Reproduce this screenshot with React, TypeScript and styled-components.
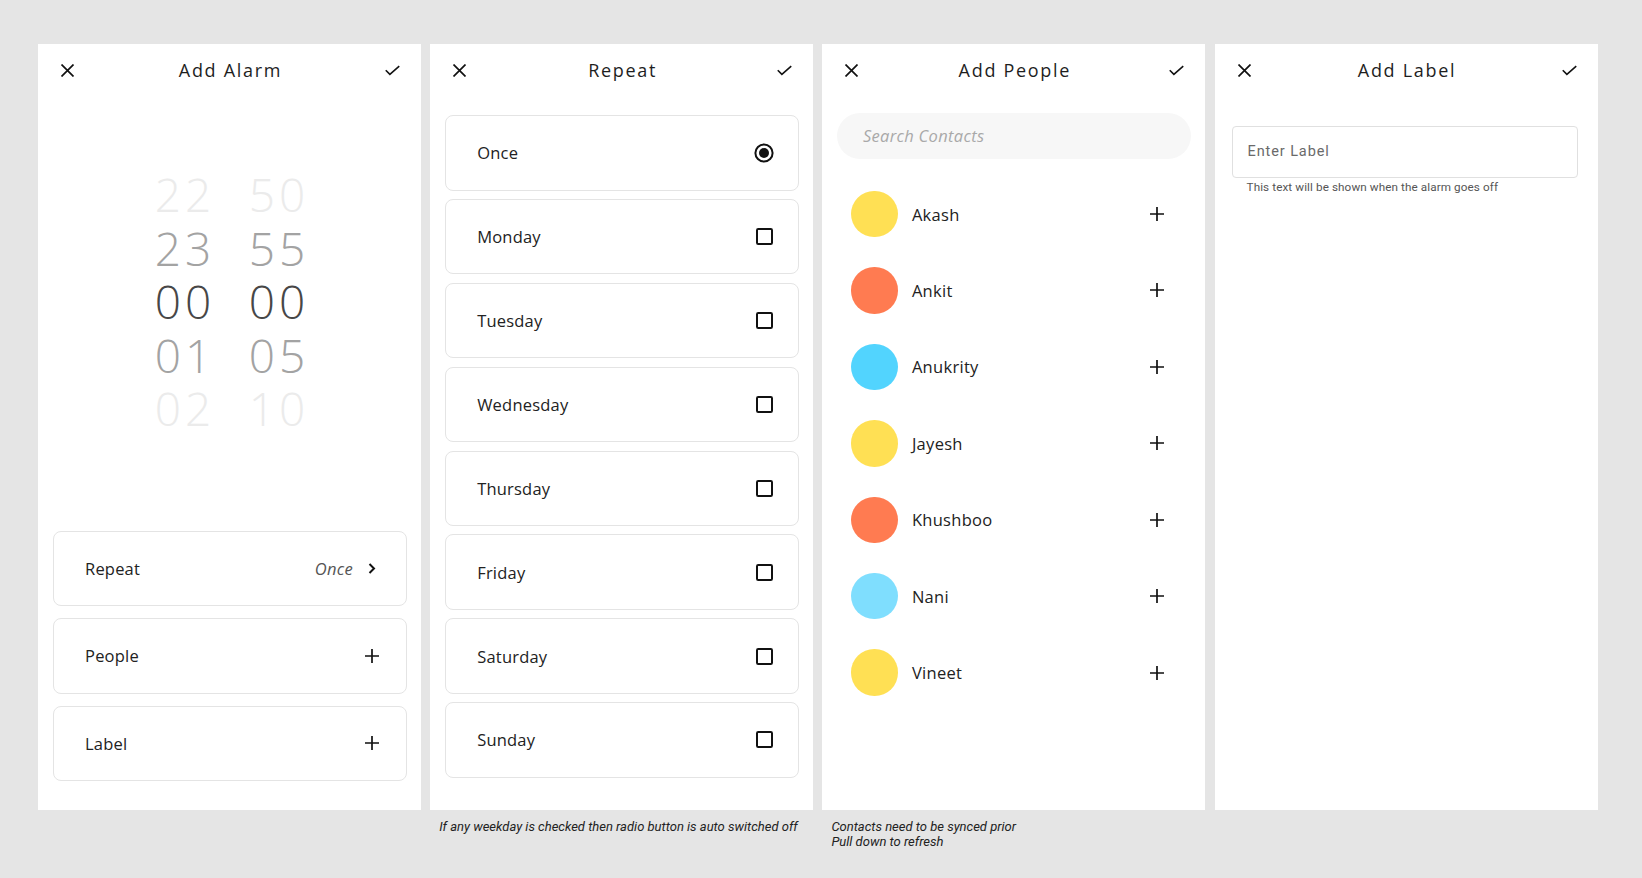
import React from "react";
import styled, { createGlobalStyle } from "styled-components";

const Global = createGlobalStyle`
  html, body { margin: 0; padding: 0; background: #e5e5e5; }
  body { font-family: "Open Sans", "Noto Sans", sans-serif; color: #222; }
  * { box-sizing: border-box; }
`;

const Page = styled.div`
  display: flex;
  gap: 9.2px;
  padding: 44px 0 0 38px;
  min-height: 878px;
`;

const Column = styled.div`
  display: flex;
  flex-direction: column;
  width: 383px;
`;

const Panel = styled.div`
  background: #fff;
  height: 766px;
  display: flex;
  flex-direction: column;
`;

const Header = styled.div`
  height: 52px;
  flex: 0 0 52px;
  display: flex;
  align-items: center;
  justify-content: space-between;
  padding: 0 21px 0 22px;
`;

const Title = styled.div`
  font-size: 18px;
  letter-spacing: 1.7px;
  color: #1e1e1e;
  padding-left: 1px;
`;

const IconBox = styled.div`
  width: 15px;
  height: 15px;
  display: flex;
  align-items: center;
  justify-content: center;
`;

const Note = styled.div`
  font-family: Roboto, "Liberation Sans", sans-serif;
  font-style: italic;
  font-size: 13px;
  line-height: 14.5px;
  color: #222;
  padding: 10px 0 0 9px;
`;

/* ---------- icons ---------- */
const CloseIcon = () => (
  <svg width="13" height="13" viewBox="0 0 13 13">
    <path d="M0.5 0.5 L12.5 12.5 M12.5 0.5 L0.5 12.5" stroke="#111" strokeWidth="1.7" fill="none" />
  </svg>
);
const CheckIcon = () => (
  <svg width="16" height="11" viewBox="0 0 16 11">
    <path d="M0.8 5.2 L5.2 9.6 L15.2 0.8" stroke="#111" strokeWidth="1.7" fill="none" />
  </svg>
);
const PlusIcon = () => (
  <svg width="14" height="14" viewBox="0 0 14 14">
    <path d="M7 0 V14 M0 7 H14" stroke="#111" strokeWidth="1.7" fill="none" />
  </svg>
);
const ChevronIcon = () => (
  <svg width="8" height="11" viewBox="0 0 8 11">
    <path d="M1.5 1 L6 5.5 L1.5 10" stroke="#111" strokeWidth="2" fill="none" />
  </svg>
);
const RadioIcon = () => (
  <svg width="20" height="20" viewBox="0 0 20 20">
    <circle cx="10" cy="10" r="8.6" stroke="#111" strokeWidth="2" fill="none" />
    <circle cx="10" cy="10" r="5" fill="#111" />
  </svg>
);
const BoxIcon = () => (
  <svg width="17" height="17" viewBox="0 0 17 17">
    <rect x="1" y="1" width="15" height="15" rx="1.2" stroke="#111" strokeWidth="2" fill="none" />
  </svg>
);

const PanelHeader: React.FC<{ title: string }> = ({ title }) => (
  <Header>
    <IconBox><CloseIcon /></IconBox>
    <Title>{title}</Title>
    <IconBox><CheckIcon /></IconBox>
  </Header>
);

/* ---------- cards ---------- */
const CardList = styled.div<{ $gap: number; $top?: number }>`
  display: flex;
  flex-direction: column;
  gap: ${(p) => p.$gap}px;
  padding: 0 14px 0 15px;
  margin-top: ${(p) => (p.$top !== undefined ? `${p.$top}px` : "auto")};
  margin-bottom: ${(p) => (p.$top !== undefined ? "0" : "29px")};
`;

const Card = styled.div`
  height: 75.5px;
  border: 1px solid #e4e4e4;
  border-radius: 8px;
  display: flex;
  align-items: center;
  padding: 0 24px 0 31px;
  font-size: 16.5px;
  color: #222;
  letter-spacing: 0.2px;
`;

const CardLabel = styled.span`
  flex: 1;
`;

const CardValue = styled.span`
  font-style: italic;
  color: #555;
  margin-right: 9px;
  letter-spacing: 0.3px;
`;

const Trail = styled.span`
  width: 20px;
  display: flex;
  align-items: center;
  justify-content: center;
`;

/* ---------- time picker ---------- */
const Picker = styled.div`
  display: flex;
  justify-content: center;
  gap: 30px;
  margin-top: 72px;
  padding-left: 1px;
`;

const PickerCol = styled.div`
  width: 64px;
  display: flex;
  flex-direction: column;
  align-items: center;
`;

const toneColor = { faint: "#ebebeb", mid: "#a3a3a3", main: "#474747" };

const Digit = styled.div<{ $tone: "faint" | "mid" | "main" }>`
  font-size: 46px;
  font-weight: 300;
  line-height: 53.5px;
  height: 53.5px;
  letter-spacing: 4px;
  padding-left: 4px;
  color: ${(p) => toneColor[p.$tone]};
`;

/* ---------- people ---------- */
const Search = styled.div`
  margin: 16.5px 14px 0 14.5px;
  height: 46.5px;
  border-radius: 24px;
  background: #f7f7f7;
  display: flex;
  align-items: center;
  padding-left: 26px;
  font-style: italic;
  font-size: 16.5px;
  color: #a9a9a9;
  letter-spacing: 0.3px;
`;

const Contacts = styled.div`
  display: flex;
  flex-direction: column;
  margin-top: 16.8px;
  padding: 0 38px 0 29px;
`;

const Contact = styled.div`
  height: 76.45px;
  display: flex;
  align-items: center;
`;

const Avatar = styled.div<{ $color: string }>`
  width: 46.5px;
  height: 46.5px;
  border-radius: 50%;
  background: ${(p) => p.$color};
  flex: 0 0 auto;
`;

const Name = styled.span`
  flex: 1;
  margin-left: 14px;
  font-size: 16.5px;
  letter-spacing: 0.3px;
  color: #222;
`;

/* ---------- label ---------- */
const LabelBody = styled.div`
  padding: 30px 19.5px 0 17.5px;
  font-family: Roboto, "Liberation Sans", sans-serif;
`;

const LabelInput = styled.div`
  height: 51.5px;
  border: 1px solid #e0e0e0;
  border-radius: 4px;
  display: flex;
  align-items: center;
  padding-left: 14.5px;
  font-size: 14.5px;
  letter-spacing: 0.9px;
  color: #6a6a6a;
`;

const Helper = styled.div`
  font-size: 11.7px;
  color: #555;
  padding: 2px 0 0 14.5px;
  letter-spacing: 0.1px;
`;

const hours: [string, "faint" | "mid" | "main"][] = [
  ["22", "faint"], ["23", "mid"], ["00", "main"], ["01", "mid"], ["02", "faint"],
];
const minutes: [string, "faint" | "mid" | "main"][] = [
  ["50", "faint"], ["55", "mid"], ["00", "main"], ["05", "mid"], ["10", "faint"],
];

const days = ["Monday", "Tuesday", "Wednesday", "Thursday", "Friday", "Saturday", "Sunday"];

const people: [string, string][] = [
  ["Akash", "#ffe054"],
  ["Ankit", "#ff7b51"],
  ["Anukrity", "#52d4fe"],
  ["Jayesh", "#ffe054"],
  ["Khushboo", "#ff7b51"],
  ["Nani", "#7fdefe"],
  ["Vineet", "#ffe054"],
];

export default function App() {
  return (
    <>
      <Global />
      <Page>
        <Column>
          <Panel>
            <PanelHeader title="Add Alarm" />
            <Picker>
              <PickerCol>
                {hours.map(([v, t], i) => (
                  <Digit key={i} $tone={t}>{v}</Digit>
                ))}
              </PickerCol>
              <PickerCol>
                {minutes.map(([v, t], i) => (
                  <Digit key={i} $tone={t}>{v}</Digit>
                ))}
              </PickerCol>
            </Picker>
            <CardList $gap={11.8}>
              <Card>
                <CardLabel>Repeat</CardLabel>
                <CardValue>Once</CardValue>
                <Trail><ChevronIcon /></Trail>
              </Card>
              <Card>
                <CardLabel>People</CardLabel>
                <Trail><PlusIcon /></Trail>
              </Card>
              <Card>
                <CardLabel>Label</CardLabel>
                <Trail><PlusIcon /></Trail>
              </Card>
            </CardList>
          </Panel>
        </Column>

        <Column>
          <Panel>
            <PanelHeader title="Repeat" />
            <CardList $gap={8.4} $top={19}>
              <Card>
                <CardLabel>Once</CardLabel>
                <Trail><RadioIcon /></Trail>
              </Card>
              {days.map((d) => (
                <Card key={d}>
                  <CardLabel>{d}</CardLabel>
                  <Trail><BoxIcon /></Trail>
                </Card>
              ))}
            </CardList>
          </Panel>
          <Note>If any weekday is checked then radio button is auto switched off</Note>
        </Column>

        <Column>
          <Panel>
            <PanelHeader title="Add People" />
            <Search>Search Contacts</Search>
            <Contacts>
              {people.map(([n, c]) => (
                <Contact key={n}>
                  <Avatar $color={c} />
                  <Name>{n}</Name>
                  <Trail><PlusIcon /></Trail>
                </Contact>
              ))}
            </Contacts>
          </Panel>
          <Note>
            Contacts need to be synced prior
            <br />
            Pull down to refresh
          </Note>
        </Column>

        <Column>
          <Panel>
            <PanelHeader title="Add Label" />
            <LabelBody>
              <LabelInput>Enter Label</LabelInput>
              <Helper>This text will be shown when the alarm goes off</Helper>
            </LabelBody>
          </Panel>
        </Column>
      </Page>
    </>
  );
}
